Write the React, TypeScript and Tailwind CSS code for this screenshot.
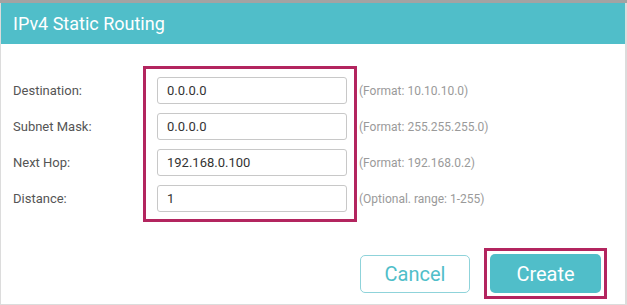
import React from 'react'

const rows = [
  { label: 'Destination:', value: '0.0.0.0', hint: '(Format: 10.10.10.0)' },
  { label: 'Subnet Mask:', value: '0.0.0.0', hint: '(Format: 255.255.255.0)' },
  { label: 'Next Hop:', value: '192.168.0.100', hint: '(Format: 192.168.0.2)' },
  { label: 'Distance:', value: '1', hint: '(Optional. range: 1-255)' },
]

export default function App() {
  return (
    <div className="w-[627px] h-[305px] bg-white font-['Roboto',sans-serif] overflow-hidden">
      {/* top shadow strip */}
      <div className="h-[3px] bg-[#a3a3a3]" />
      <div className="w-[627px] h-[302px] flex flex-col border-l border-r-2 border-b border-[#dcdcdc]">
        {/* Header */}
        <div className="h-[41px] shrink-0 bg-[#50bec9] flex items-center pl-[12px]">
          <h2 className="text-white text-[18px] leading-none">IPv4 Static Routing</h2>
        </div>

        {/* Form */}
        <div className="flex pt-[22px] pl-[12px]">
          <div className="w-[130px] pt-[11px] flex flex-col gap-[9px]">
            {rows.map((r) => (
              <div key={r.label} className="h-[27px] flex items-center text-[13px] text-[#555]">
                {r.label}
              </div>
            ))}
          </div>
          <div className="w-[214px] border-[3px] border-[#b3255f] pt-[8px] pb-[7px] pl-[11px] pr-[7px] flex flex-col gap-[9px]">
            {rows.map((r) => (
              <div
                key={r.label}
                className="h-[27px] w-[190px] border border-[#c8c8c8] rounded-[3px] flex items-center pl-[9px] text-[13px] text-[#333]"
              >
                {r.value}
              </div>
            ))}
          </div>
          <div className="pt-[11px] pl-[2px] flex flex-col gap-[9px]">
            {rows.map((r) => (
              <div key={r.label} className="h-[27px] flex items-center text-[12px] text-[#9a9a9a]">
                {r.hint}
              </div>
            ))}
          </div>
        </div>

        {/* Buttons */}
        <div className="flex justify-end items-center gap-[14px] pt-[26px] pr-[18px]">
          <button className="w-[110px] h-[38px] rounded-[5px] border border-[#8fd3da] text-[#50bec9] text-[20px] bg-white">
            Cancel
          </button>
          <div className="border-[3px] border-[#b3255f] p-[3px]">
            <button className="w-[111px] h-[39px] rounded-[5px] bg-[#50bec9] text-white text-[20px]">
              Create
            </button>
          </div>
        </div>
      </div>
    </div>
  )
}
